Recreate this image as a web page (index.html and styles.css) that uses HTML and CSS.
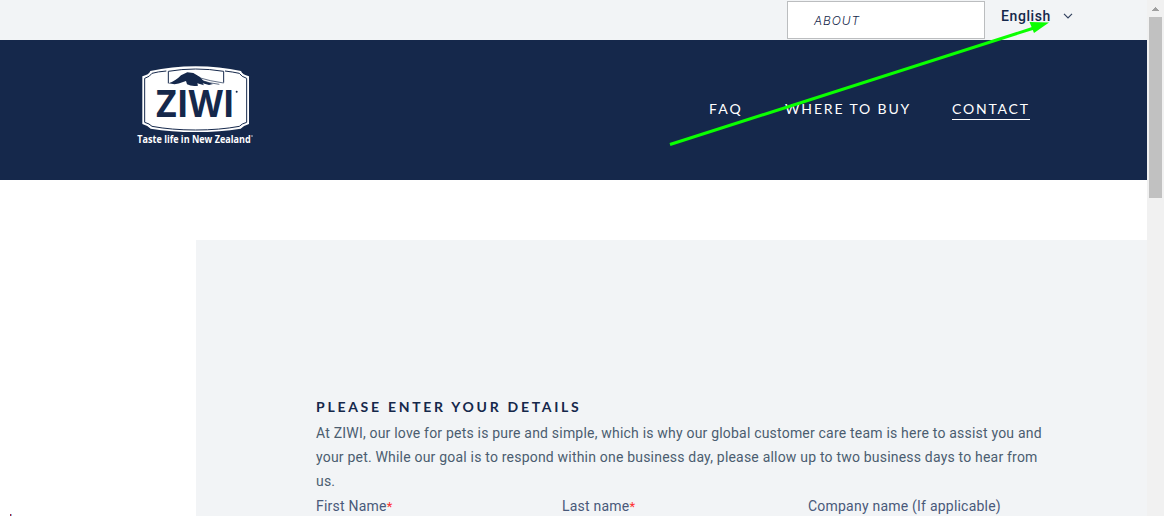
FILE: index.html
```html
<!DOCTYPE html>
<html lang="en">
<head>
<meta charset="utf-8">
<title>ZIWI Contact</title>
<link rel="stylesheet" href="styles.css">
</head>
<body>
<div class="page">
  <div class="topbar">
    <a class="about">ABOUT</a>
    <div class="language">English
      <svg class="chevron" width="10" height="6" viewBox="0 0 10 6"><path d="M1 .8 5 4.8 9 .8" fill="none" stroke="#33425f" stroke-width="1.2"/></svg>
    </div>
  </div>
  <header class="header">
    <svg class="logo" width="130" height="94" viewBox="0 0 390 282">
      <path d="M61 39Q125 25 197 25T333 39Q337 50 357 55V198Q340 203 332 212Q270 222 197 222T62 212Q54 203 37 198V55Q57 50 61 39Z" fill="#fff"/>
      <path d="M109 39Q83 41 66 46Q60 56 44 61V193Q59 197 66 205Q125 216 197 216T328 205Q335 197 350 193V61Q334 56 328 46Q310 42 285 39" fill="none" stroke="#15284b" stroke-width="3"/>
      <path d="M115 76V40Q155 33 197 33T281 40V74" fill="none" stroke="#15284b" stroke-width="3"/>
      <path d="M115 76Q137 69 153 52L172 43 190 45 210 57 220 68 249 78 237 81 218 76 222 82 202 76 204 83Q185 86 171 79L168 69 157 73Q140 82 115 76Z" fill="#15284b"/>
      <path d="M211 60Q239 69 281 75M206 65Q238 76 268 79M184 47 193 59" fill="none" stroke="#15284b" stroke-width="2"/>
      <text class="logo-name" x="78" y="178" textLength="236" lengthAdjust="spacingAndGlyphs">ZIWI</text>
      <circle cx="320" cy="101" r="3" fill="#15284b"/>
      <text class="logo-tagline" x="22" y="256" textLength="340" lengthAdjust="spacingAndGlyphs">Taste life in New Zealand</text>
      <circle cx="366" cy="234" r="2" fill="#fff"/>
    </svg>
    <nav class="nav">
      <a class="faq">FAQ</a>
      <a class="buy">WHERE TO BUY</a>
      <a class="contact">CONTACT</a>
    </nav>
  </header>
  <main class="panel">
    <h1 class="title">PLEASE ENTER YOUR DETAILS</h1>
    <p class="intro">At ZIWI, our love for pets is pure and simple, which is why our global customer care team is here to assist you and<br>your pet. While our goal is to respond within one business day, please allow up to two business days to hear from<br>us.</p>
    <div class="fields">
      <label>First Name<span class="required">*</span></label>
      <label>Last name<span class="required">*</span></label>
      <label>Company name (If applicable)</label>
    </div>
  </main>
</div>
<div class="scrollbar">
  <svg width="7" height="4" viewBox="0 0 7 4"><path d="M0 4V3H1V2H2V1H3V0H4V1H5V2H6V3H7V4Z" fill="#a0a0a0"/></svg>
  <div class="thumb"></div>
</div>
<svg class="arrow" width="1164" height="516" viewBox="0 0 1164 516"><path d="M670 144.500 1034 28" stroke="#0bff00" stroke-width="3"/><path d="M1049 22.500 1029.500 22 1034 33Z" fill="#0bff00"/></svg>
<i class="mark"></i>
</body>
</html>
```
FILE: styles.css
```css
* { box-sizing: border-box; }
body { position: relative; display: flex; width: 1164px; height: 516px; margin: 0; overflow: hidden; background: #fff; color: #15284b; font-family: Roboto, sans-serif; }
.page { width: 1147px; }
.topbar { display: flex; height: 40px; padding: 1px 0 0 787px; background: #f2f4f6; }
.about { width: 198px; height: 38px; padding-left: 26px; border: 1px solid #bbbdbf; background: #fff; font: italic 300 12px/38px Inter, sans-serif; letter-spacing: .9px; }
.language { display: flex; align-items: center; gap: 12px; height: 30px; margin-left: 16px; font-weight: 500; font-size: 14px; letter-spacing: .6px; white-space: nowrap; }
.header { display: flex; height: 140px; padding: 18px 0 0 130px; background: #15284b; }
.logo { flex: none; overflow: visible; }
.logo-name { fill: #15284b; font: 700 113px "Open Sans", sans-serif; }
.logo-tagline { fill: #fff; font: 700 34px "Open Sans", sans-serif; }
.nav { display: flex; gap: 42px; margin: 44px 0 0 449px; color: #fff; font: 14px/14px Lato, sans-serif; white-space: nowrap; }
.nav a { height: 18px; }
.faq { width: 34px; letter-spacing: 2.1px; }
.buy { width: 125px; letter-spacing: 1.85px; }
.contact { width: 78px; border-bottom: 1px solid #fff; letter-spacing: 1.8px; }
.panel { height: 276px; margin: 60px 0 0 196px; padding: 158px 0 0 120px; background: #f2f4f6; color: #4b5d70; font-size: 14px; }
.title { margin: 0; color: #15284b; font: 700 14px/18px Lato, sans-serif; letter-spacing: 2.72px; }
.intro { margin: 5px 0 0; line-height: 24px; letter-spacing: .2px; white-space: nowrap; }
.fields { display: grid; grid-template-columns: 246px 246px 246px; margin-top: 1px; color: #49597a; line-height: 24px; letter-spacing: .22px; }
.required { color: #ff3030; font-size: 13px; }
.scrollbar { display: flex; flex-direction: column; align-items: center; width: 17px; padding-top: 7px; background: #f1f1f1; }
.thumb { width: 13px; height: 181px; margin-top: 6px; background: #c1c1c1; }
.arrow { position: absolute; inset: 0; }
.mark { position: absolute; left: 10px; top: 514px; width: 2px; height: 2px; background: linear-gradient(90deg, #a61f3e 50%, #8bb9e0 50%); }
```
